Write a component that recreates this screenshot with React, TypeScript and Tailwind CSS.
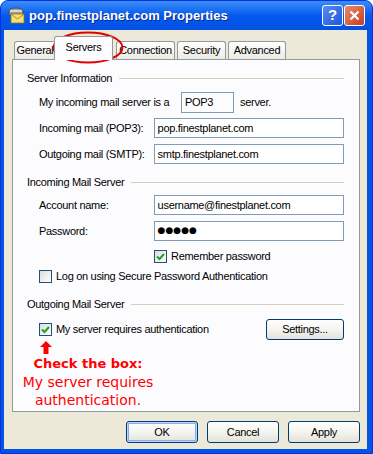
import React from 'react';

const ui = "font-['Liberation_Sans',Arial,sans-serif] text-[11px] tracking-[-0.3px] text-black";

function CheckBox({ checked }: { checked?: boolean }) {
  return (
    <span className="flex h-[13px] w-[13px] shrink-0 items-center justify-center border border-[#1C5180] bg-linear-to-br from-[#DCDCD7] to-white">
      {checked && (
        <svg width="9" height="9" viewBox="0 0 9 9">
          <path d="M1 4.5 L3.5 7 L8 2" fill="none" stroke="#21A121" strokeWidth="2" />
        </svg>
      )}
    </span>
  );
}

function Field({ value, w = 'w-[191px]' }: { value: React.ReactNode; w?: string }) {
  return (
    <div className={`flex h-[20px] ${w} items-center border border-[#7F9DB9] bg-white px-[3px]`}>{value}</div>
  );
}

function Group({ title }: { title: string }) {
  return (
    <div className="flex h-[14px] items-center">
      <span className="pr-[7px] text-[#000]">{title}</span>
      <div className="h-px flex-1 bg-[#D0D0BF]" />
    </div>
  );
}

function Btn({ label, def }: { label: string; def?: boolean }) {
  return (
    <div
      className={`flex h-[22px] w-[72px] items-center justify-center rounded-[3px] border border-[#003C74] bg-linear-to-b from-white via-[#F4F4F0] to-[#E3E2DA] ${
        def ? 'shadow-[inset_0_0_0_1px_#C2D5FB,inset_0_0_0_2px_#8AACEC]' : ''
      }`}
    >
      {label}
    </div>
  );
}

const tabs = [
  { label: 'General', w: 'w-[42px]', ml: 'ml-0' },
  { label: 'Servers', w: 'w-[59px]', ml: '-ml-[2px]', active: true },
  { label: 'Connection', w: 'w-[59px]', ml: 'ml-[3px]' },
  { label: 'Security', w: 'w-[49px]', ml: 'ml-[2px]' },
  { label: 'Advanced', w: 'w-[58px]', ml: 'ml-[2px]' },
];

export default function App() {
  return (
    <div className="flex h-[454px] w-[373px] flex-col overflow-hidden rounded-t-[8px] border border-[#0831D9] bg-[#0553E6]">
      {/* Title bar */}
      <div className="flex h-[29px] shrink-0 items-center bg-linear-to-b from-[#3A8DF8] via-[#0559EE] to-[#0251E4] pl-[6px] pr-[7px]">
        <svg width="18" height="17" viewBox="0 0 18 17">
          <path d="M2 5 Q2 1 9 1 Q16 1 16 5 L16 8 L2 8 Z" fill="#9A9A9A" stroke="#444" strokeWidth="0.8" />
          <rect x="3" y="3" width="12" height="2" fill="#D8D8D8" />
          <rect x="4" y="7" width="13" height="9" fill="#F8E070" stroke="#8A7A20" strokeWidth="0.8" />
          <path d="M4 7 L10.5 12 L17 7" fill="none" stroke="#8A7A20" strokeWidth="0.8" />
        </svg>
        <span className="ml-[4px] font-['Liberation_Sans',Arial,sans-serif] text-[13px] font-bold text-white [text-shadow:1px_1px_0_#0A2A8A]">
          pop.finestplanet.com Properties
        </span>
        <div className="ml-auto flex gap-[1px]">
          <div className="flex h-[21px] w-[21px] items-center justify-center rounded-[3px] border border-white bg-linear-to-br from-[#5A8BF0] to-[#1E55D8] font-['Liberation_Sans',Arial,sans-serif] text-[15px] font-bold text-white">
            ?
          </div>
          <div className="flex h-[21px] w-[21px] items-center justify-center rounded-[3px] border border-white bg-linear-to-br from-[#E88A6A] to-[#C63A14]">
            <svg width="11" height="11" viewBox="0 0 11 11">
              <path d="M1.5 1.5 L9.5 9.5 M9.5 1.5 L1.5 9.5" stroke="white" strokeWidth="2.2" />
            </svg>
          </div>
        </div>
      </div>

      {/* Body */}
      <div className="flex flex-1 pb-[4px] pl-[3px] pr-[5px]">
        <div className={`relative flex flex-1 flex-col bg-[#ECE9D8] pl-[8px] ${ui}`}>
          {/* Tabs */}
          <div className="ml-[2px] mt-[6px] flex h-[23px] items-end">
            {tabs.map((t) => (
              <div
                key={t.label}
                className={`${t.w} ${t.ml} flex items-center justify-center overflow-hidden whitespace-nowrap rounded-t-[3px] border border-b-0 border-[#919B9C] ${
                  t.active
                    ? 'relative z-10 -mb-px h-[24px] bg-[#FCFCFE] pb-[2px]'
                    : 'h-[18px] bg-linear-to-b from-white to-[#ECEBE5]'
                }`}
              >
                {t.label}
              </div>
            ))}
          </div>

          {/* Panel */}
          <div className="flex h-[353px] w-[348px] flex-col border border-[#919B9C] bg-[#FCFCFE] pl-[14px] pr-[15px]">
            <div className="mt-[11px]">
              <Group title="Server Information" />
            </div>
            <div className="ml-[12px] mt-[7px] flex h-[21px] items-center">
              <span className="w-[142px]">My incoming mail server is a</span>
              <div className="flex h-[21px] w-[53px] items-center border border-[#7F9DB9] bg-[#FCFCFE] px-[3px]">POP3</div>
              <span className="ml-[6px]">server.</span>
            </div>
            <div className="ml-[12px] mt-[5px] flex items-center">
              <span className="w-[115px]">Incoming mail (POP3):</span>
              <Field value="pop.finestplanet.com" />
            </div>
            <div className="ml-[12px] mt-[6px] flex items-center">
              <span className="w-[115px]">Outgoing mail (SMTP):</span>
              <Field value="smtp.finestplanet.com" />
            </div>

            <div className="mt-[11px]">
              <Group title="Incoming Mail Server" />
            </div>
            <div className="ml-[12px] mt-[6px] flex items-center">
              <span className="w-[115px]">Account name:</span>
              <Field value="username@finestplanet.com" />
            </div>
            <div className="ml-[12px] mt-[6px] flex items-center">
              <span className="w-[115px]">Password:</span>
              <Field value={<span className="font-['DejaVu_Sans',sans-serif] text-[9px] tracking-[0px]">●●●●●</span>} />
            </div>
            <div className="ml-[127px] mt-[8px] flex h-[14px] items-center gap-[4px]">
              <CheckBox checked />
              <span>Remember password</span>
            </div>
            <div className="ml-[12px] mt-[6px] flex h-[14px] items-center gap-[4px]">
              <CheckBox />
              <span>Log on using Secure Password Authentication</span>
            </div>

            <div className="mt-[14px]">
              <Group title="Outgoing Mail Server" />
            </div>
            <div className="ml-[12px] mt-[8px] flex h-[21px] items-center gap-[4px]">
              <CheckBox checked />
              <span>My server requires authentication</span>
              <div className="ml-auto flex h-[21px] w-[78px] items-center justify-center rounded-[3px] border border-[#003C74] bg-linear-to-b from-white via-[#F4F4F0] to-[#E3E2DA]">
                Settings...
              </div>
            </div>
            <div className="ml-[13px] mt-[1px]">
              <svg width="12" height="13" viewBox="0 0 12 13">
                <path d="M6 0 L12 6 L8.5 6 L8.5 13 L3.5 13 L3.5 6 L0 6 Z" fill="#FF0000" />
              </svg>
            </div>
            <div className="-ml-[14px] mt-[1px] w-[150px] text-center font-['DejaVu_Sans',Verdana,sans-serif] tracking-normal text-[#FF0000]">
              <div className="text-[13px] font-bold leading-[18px]">Check the box:</div>
              <div className="text-[14px] leading-[18px]">My server requires</div>
              <div className="text-[14px] leading-[18px]">authentication.</div>
            </div>
          </div>

          {/* Buttons */}
          <div className="mt-[9px] flex w-[348px] justify-end gap-[9px]">
            <Btn label="OK" def />
            <Btn label="Cancel" />
            <Btn label="Apply" />
          </div>

          {/* Red circle annotation */}
          <svg className="absolute left-[48px] top-[1px]" width="72" height="33" viewBox="0 0 72 33">
            <ellipse cx="36" cy="16.5" rx="34.5" ry="15" fill="none" stroke="#E00000" strokeWidth="2" />
          </svg>
        </div>
      </div>
    </div>
  );
}
